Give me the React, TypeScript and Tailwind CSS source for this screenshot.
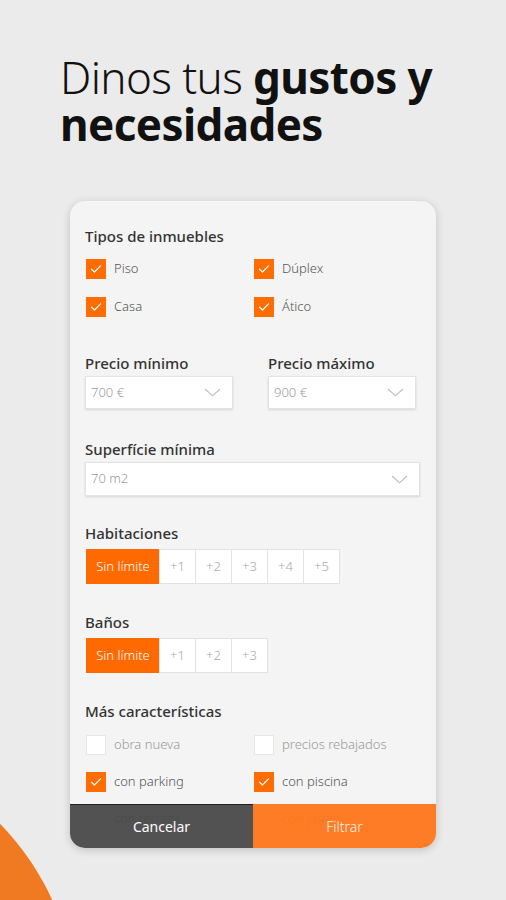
import React from "react";

const font = { fontFamily: '"Noto Sans", "Open Sans", sans-serif' };

function Check({ checked }: { checked: boolean }) {
  if (!checked) {
    return <div className="w-[20px] h-[20px] bg-white border border-[#e6e6e6] shrink-0" />;
  }
  return (
    <div className="w-[20px] h-[20px] bg-[#fe6c02] flex items-center justify-center shrink-0">
      <svg width="12" height="10" viewBox="0 0 12 10" fill="none">
        <path d="M1.5 5.2 L4.5 8 L10.5 1.8" stroke="#fff" strokeWidth="1.2" strokeLinecap="round" strokeLinejoin="round" />
      </svg>
    </div>
  );
}

function CheckItem({ label, checked }: { label: string; checked: boolean }) {
  return (
    <div className="flex items-center gap-[8px] h-[20px]">
      <Check checked={checked} />
      <span className={`text-[13px] font-light ${checked ? "text-[#555]" : "text-[#999]"}`}>{label}</span>
    </div>
  );
}

function Chevron() {
  return (
    <svg width="17" height="9" viewBox="0 0 17 9" fill="none">
      <path d="M1 1 L8.5 7.8 L16 1" stroke="#bdbdbd" strokeWidth="1.1" />
    </svg>
  );
}

function Select({ value, className }: { value: string; className: string }) {
  return (
    <div className={`bg-white border border-[#e3e3e3] shadow-[0_1px_2px_rgba(0,0,0,0.12)] flex items-center justify-between pl-[5px] pr-[11px] ${className}`}>
      <span className="text-[13px] font-light text-[#9a9a9a]">{value}</span>
      <Chevron />
    </div>
  );
}

function Title({ children, className = "" }: { children: React.ReactNode; className?: string }) {
  return <div className={`text-[15px] leading-[20px] font-medium text-[#333] ${className}`}>{children}</div>;
}

function Segments({ items }: { items: string[] }) {
  return (
    <div className="flex h-[35px]">
      <div className="w-[74px] bg-[#fe6a00] flex items-center justify-center text-white text-[13px] font-light">Sin límite</div>
      {items.map((it) => (
        <div key={it} className="w-[37px] bg-white border border-[#e2e2e2] -ml-px first:ml-0 flex items-center justify-center text-[#aaa] text-[13px] font-light">
          {it}
        </div>
      ))}
    </div>
  );
}

export default function App() {
  return (
    <div style={font} className="relative w-[506px] h-[900px] overflow-hidden bg-[#ebebeb]">
      <div className="absolute left-[-456px] top-[744px] w-[532px] h-[532px] rounded-full bg-[#f07a21]" />
      <div className="relative pt-[54px] pl-[60px] text-[44px] leading-[47px] text-[#111] tracking-[-0.6px]">
        <span className="font-light">Dinos tus </span>
        <span className="font-bold">gustos y</span>
        <br />
        <span className="font-bold">necesidades</span>
      </div>
      <div className="relative mx-auto mt-[53px] w-[366px] h-[647px] bg-[#f4f4f4] rounded-[15px] overflow-hidden shadow-[0_2px_8px_rgba(0,0,0,0.18)]">
        <div className="pl-[15px] pt-[25px]">
          <Title>Tipos de inmuebles</Title>
          <div className="grid grid-cols-[168px_1fr] gap-y-[18px] mt-[13px] pl-[1px]">
            <CheckItem label="Piso" checked />
            <CheckItem label="Dúplex" checked />
            <CheckItem label="Casa" checked />
            <CheckItem label="Ático" checked />
          </div>
          <div className="flex gap-[35px] mt-[36px]">
            <div>
              <Title>Precio mínimo</Title>
              <Select value="700 €" className="w-[148px] h-[33px] mt-[3px]" />
            </div>
            <div>
              <Title>Precio máximo</Title>
              <Select value="900 €" className="w-[148px] h-[33px] mt-[3px]" />
            </div>
          </div>
          <Title className="mt-[30px]">Superfície mínima</Title>
          <Select value="70 m2" className="w-[335px] h-[34px] mt-[3px]" />
          <Title className="mt-[27px]">Habitaciones</Title>
          <div className="mt-[6px] pl-[1px]">
            <Segments items={["+1", "+2", "+3", "+4", "+5"]} />
          </div>
          <Title className="mt-[28px]">Baños</Title>
          <div className="mt-[6px] pl-[1px]">
            <Segments items={["+1", "+2", "+3"]} />
          </div>
          <Title className="mt-[28px]">Más características</Title>
          <div className="grid grid-cols-[168px_1fr] gap-y-[17px] mt-[14px] pl-[1px]">
            <CheckItem label="obra nueva" checked={false} />
            <CheckItem label="precios rebajados" checked={false} />
            <CheckItem label="con parking" checked />
            <CheckItem label="con piscina" checked />
            <CheckItem label="con terraza" checked={false} />
            <CheckItem label="con jardín" checked={false} />
          </div>
        </div>
        <div className="absolute left-0 right-0 bottom-0 h-[44px] flex">
          <div className="w-[183px] bg-[#454545]/[0.93] border-t border-[#222] flex items-center justify-center text-white text-[14px]">Cancelar</div>
          <div className="flex-1 bg-[#fe7519]/[0.95] flex items-center justify-center text-[#fff3ea] text-[14px] font-light">Filtrar</div>
        </div>
      </div>
    </div>
  );
}
